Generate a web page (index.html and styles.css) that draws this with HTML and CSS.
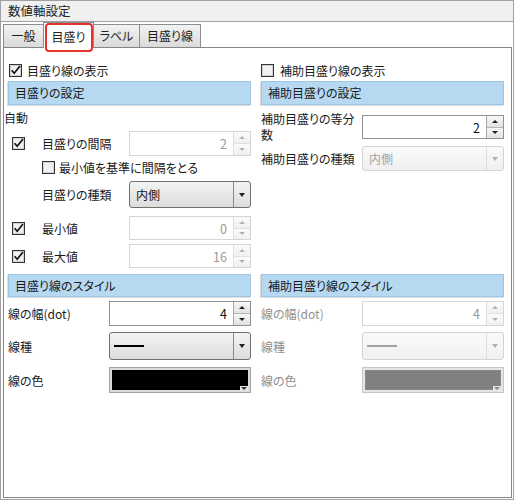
FILE: index.html
```html
<!DOCTYPE html>
<html lang="ja">
<head>
<meta charset="utf-8">
<title>数値軸設定</title>
<link rel="stylesheet" href="styles.css">
</head>
<body>
<div class="window">
  <div class="title">数値軸設定</div>
  <div class="tabs">
    <div class="tab tab-general">一般</div>
    <div class="tab tab-active">目盛り<span class="highlight"></span></div>
    <div class="tab tab-label">ラベル</div>
    <div class="tab tab-grid">目盛り線</div>
  </div>
  <div class="panel">
    <div class="cols top">
      <div class="col">
        <div class="check-row">
          <svg class="cb" width="13" height="13" viewBox="0 0 13 13"><rect x="0.5" y="0.5" width="12" height="12" fill="#fff" stroke="#333"/><rect x="1.5" y="1.5" width="10" height="10" fill="#f1f1f1" stroke="#d2d2d2"/><path d="M2.6 6.2 L5.2 9.2 L11 2" fill="none" stroke="#111" stroke-width="1.7"/></svg>
          <span>目盛り線の表示</span>
        </div>
        <div class="bar">目盛りの設定</div>
        <div class="auto">自動</div>
        <div class="field r-interval">
          <span class="cb-slot"><svg class="cb" width="13" height="13" viewBox="0 0 13 13"><rect x="0.5" y="0.5" width="12" height="12" fill="#fff" stroke="#333"/><rect x="1.5" y="1.5" width="10" height="10" fill="#f1f1f1" stroke="#d2d2d2"/><path d="M2.6 6.2 L5.2 9.2 L11 2" fill="none" stroke="#111" stroke-width="1.7"/></svg></span>
          <span class="flabel">目盛りの間隔</span>
          <div class="spin is-disabled"><span class="spin-value">2</span><span class="spin-btns"><span class="spin-btn"><i class="up"></i></span><span class="spin-btn"><i class="down"></i></span></span></div>
        </div>
        <div class="check-row indent r-minbase">
          <svg class="cb" width="13" height="13" viewBox="0 0 13 13"><rect x="0.5" y="0.5" width="12" height="12" fill="#fff" stroke="#333"/><rect x="1.5" y="1.5" width="10" height="10" fill="#f1f1f1" stroke="#d2d2d2"/></svg>
          <span>最小値を基準に間隔をとる</span>
        </div>
        <div class="field indent r-kind">
          <span class="flabel">目盛りの種類</span>
          <div class="combo"><span class="combo-text">内側</span><span class="combo-arrow"><i class="down"></i></span></div>
        </div>
        <div class="field r-min">
          <span class="cb-slot"><svg class="cb" width="13" height="13" viewBox="0 0 13 13"><rect x="0.5" y="0.5" width="12" height="12" fill="#fff" stroke="#333"/><rect x="1.5" y="1.5" width="10" height="10" fill="#f1f1f1" stroke="#d2d2d2"/><path d="M2.6 6.2 L5.2 9.2 L11 2" fill="none" stroke="#111" stroke-width="1.7"/></svg></span>
          <span class="flabel">最小値</span>
          <div class="spin is-disabled"><span class="spin-value">0</span><span class="spin-btns"><span class="spin-btn"><i class="up"></i></span><span class="spin-btn"><i class="down"></i></span></span></div>
        </div>
        <div class="field r-max">
          <span class="cb-slot"><svg class="cb" width="13" height="13" viewBox="0 0 13 13"><rect x="0.5" y="0.5" width="12" height="12" fill="#fff" stroke="#333"/><rect x="1.5" y="1.5" width="10" height="10" fill="#f1f1f1" stroke="#d2d2d2"/><path d="M2.6 6.2 L5.2 9.2 L11 2" fill="none" stroke="#111" stroke-width="1.7"/></svg></span>
          <span class="flabel">最大値</span>
          <div class="spin is-disabled"><span class="spin-value">16</span><span class="spin-btns"><span class="spin-btn"><i class="up"></i></span><span class="spin-btn"><i class="down"></i></span></span></div>
        </div>
      </div>
      <div class="col">
        <div class="check-row right-check">
          <svg class="cb" width="13" height="13" viewBox="0 0 13 13"><rect x="0.5" y="0.5" width="12" height="12" fill="#fff" stroke="#333"/><rect x="1.5" y="1.5" width="10" height="10" fill="#f1f1f1" stroke="#d2d2d2"/></svg>
          <span>補助目盛り線の表示</span>
        </div>
        <div class="bar">補助目盛りの設定</div>
        <div class="field wide r-divs">
          <span class="flabel two-line">補助目盛りの等分数</span>
          <div class="spin"><span class="spin-value">2</span><span class="spin-btns"><span class="spin-btn"><i class="up"></i></span><span class="spin-btn"><i class="down"></i></span></span></div>
        </div>
        <div class="field wide r-kind2">
          <span class="flabel">補助目盛りの種類</span>
          <div class="combo is-disabled"><span class="combo-text">内側</span><span class="combo-arrow"><i class="down"></i></span></div>
        </div>
      </div>
    </div>
    <div class="cols style">
      <div class="col">
        <div class="bar bar-style">目盛り線のスタイル</div>
        <div class="field wide r-width">
          <span class="flabel">線の幅(dot)</span>
          <div class="spin"><span class="spin-value">4</span><span class="spin-btns"><span class="spin-btn"><i class="up"></i></span><span class="spin-btn"><i class="down"></i></span></span></div>
        </div>
        <div class="field wide r-linetype">
          <span class="flabel">線種</span>
          <div class="combo"><span class="combo-text"><span class="line-sample"></span></span><span class="combo-arrow"><i class="down"></i></span></div>
        </div>
        <div class="field wide r-color">
          <span class="flabel">線の色</span>
          <div class="color"><span class="color-fill"></span><span class="color-arrow"><i class="down"></i></span></div>
        </div>
      </div>
      <div class="col">
        <div class="bar bar-style">補助目盛り線のスタイル</div>
        <div class="field wide r-width is-muted">
          <span class="flabel">線の幅(dot)</span>
          <div class="spin is-disabled"><span class="spin-value">4</span><span class="spin-btns"><span class="spin-btn"><i class="up"></i></span><span class="spin-btn"><i class="down"></i></span></span></div>
        </div>
        <div class="field wide r-linetype is-muted">
          <span class="flabel">線種</span>
          <div class="combo is-disabled"><span class="combo-text"><span class="line-sample"></span></span><span class="combo-arrow"><i class="down"></i></span></div>
        </div>
        <div class="field wide r-color is-muted">
          <span class="flabel">線の色</span>
          <div class="color is-disabled"><span class="color-fill"></span><span class="color-arrow"><i class="down"></i></span></div>
        </div>
      </div>
    </div>
  </div>
</div>
</body>
</html>
```
FILE: styles.css
```css
html, body {
  margin: 0;
  padding: 0;
  background: #fff;
}

body {
  font-family: "Noto Sans CJK JP", "Noto Sans", sans-serif;
  font-size: 12px;
  font-feature-settings: "palt";
  color: #1a1a1a;
}

.window {
  width: 514px;
  height: 500px;
  box-sizing: border-box;
  border: 1px solid #a0a0a0;
  display: flex;
  flex-direction: column;
  background: #fff;
}

.title {
  height: 20px;
  line-height: 20px;
  padding-left: 7px;
  background: #f0f0f0;
  border-bottom: 1px solid #a0a0a0;
  font-size: 12.5px;
  color: #222;
}

.tabs {
  display: flex;
  align-items: flex-end;
  height: 25px;
  padding-left: 2px;
  background: #fff;
}

.tab {
  box-sizing: border-box;
  height: 23px;
  line-height: 21px;
  text-align: center;
  border: 1px solid #8a8d94;
  border-bottom: none;
  margin-right: -1px;
  background: linear-gradient(#f3f3f3, #dadada);
  color: #1e1e1e;
}

.tab-general { width: 41px; }
.tab-label { width: 47px; }
.tab-grid { width: 62px; }

.tab-active {
  width: 51px;
  height: 26px;
  line-height: 27px;
  margin-bottom: -1px;
  background: #fff;
  position: relative;
  z-index: 1;
}

.highlight {
  position: absolute;
  left: 1px;
  top: 0;
  width: 48px;
  height: 29px;
  box-sizing: border-box;
  border: 2px solid #e5342e;
  border-radius: 4px;
}

.panel {
  flex: 1;
  margin: 0 1px 1px 2px;
  border: 1px solid #858585;
  padding: 0 6px 0 4px;
}

.cols {
  display: grid;
  grid-template-columns: 243px 243px;
  column-gap: 10px;
  align-items: start;
}

.col {
  display: flex;
  flex-direction: column;
}

.check-row {
  display: flex;
  align-items: center;
  gap: 5px;
  height: 16px;
  margin-top: 14px;
  padding-left: 1px;
}

.right-check {
  padding-left: 0;
  gap: 6px;
}

.cb {
  display: block;
  flex: none;
}

.bar {
  height: 24px;
  box-sizing: border-box;
  margin-top: 3px;
  padding-left: 6px;
  line-height: 22px;
  background: #b6d9f1;
  border: 1px solid #9cc6e4;
  box-shadow: -1px 1px 1px rgba(0, 0, 0, 0.12);
  color: #1a1a1a;
}

.auto {
  height: 20px;
  line-height: 20px;
  margin-top: 3px;
  margin-left: -4px;
}

.field {
  display: flex;
  align-items: center;
}

.field.indent {
  padding-left: 34px;
}

.check-row.indent {
  padding-left: 34px;
  gap: 4px;
}

.cb-slot {
  width: 34px;
  flex: none;
  padding-left: 4px;
  box-sizing: border-box;
}

.flabel {
  width: 87px;
  flex: none;
}

.field.wide .flabel {
  width: 101px;
}

.two-line {
  line-height: 16px;
}

.field.is-muted .flabel {
  color: #8f8f8f;
}

/* spin box */
.spin {
  flex: 1;
  display: flex;
  height: 25px;
  box-sizing: border-box;
  border: 1px solid #8e9096;
  background: #fff;
  font-size: 12.5px;
}

.spin-value {
  flex: 1;
  text-align: right;
  padding-right: 6px;
  align-self: center;
  color: #111;
}

.spin-btns {
  width: 16px;
  display: flex;
  flex-direction: column;
  border-left: 1px solid #a8a8a8;
}

.spin-btn {
  flex: 1;
  display: flex;
  align-items: center;
  justify-content: center;
  background: linear-gradient(#f7f7f7, #e2e2e2);
}

.spin-btn:first-child {
  border-bottom: 1px solid #b5b5b5;
}

i.up {
  width: 0;
  height: 0;
  border-left: 3px solid transparent;
  border-right: 3px solid transparent;
  border-bottom: 3px solid #222;
}

i.down {
  width: 0;
  height: 0;
  border-left: 3px solid transparent;
  border-right: 3px solid transparent;
  border-top: 3px solid #222;
}

.spin.is-disabled {
  border-color: #d6d6d6;
}

.spin.is-disabled .spin-value {
  color: #9a9a9a;
}

.spin.is-disabled .spin-btns {
  border-left-color: #dedede;
}

.spin.is-disabled .spin-btn {
  background: linear-gradient(#fbfbfb, #f0f0f0);
}

.spin.is-disabled .spin-btn:first-child {
  border-bottom-color: #e0e0e0;
}

.spin.is-disabled i.up { border-bottom-color: #b4b4b4; }
.spin.is-disabled i.down { border-top-color: #b4b4b4; }

/* combo box */
.combo {
  flex: 1;
  display: flex;
  height: 27px;
  box-sizing: border-box;
  border: 1px solid #707070;
  border-radius: 3px;
  background: linear-gradient(#f4f4f4, #e8e8e8 50%, #dcdcdc);
}

.combo-text {
  flex: 1;
  display: flex;
  align-items: center;
  padding-left: 6px;
  color: #111;
}

.combo-arrow {
  width: 16px;
  display: flex;
  align-items: center;
  justify-content: center;
  border-left: 1px solid #8a8a8a;
}

.combo-arrow i.down {
  border-left-width: 3.5px;
  border-right-width: 3.5px;
  border-top-width: 4px;
}

.combo.is-disabled {
  border-color: #d3d3d3;
  background: linear-gradient(#fafafa, #f0f0f0);
}

.combo.is-disabled .combo-text {
  color: #a2a2a2;
}

.combo.is-disabled .combo-arrow {
  border-left-color: #dcdcdc;
}

.combo.is-disabled i.down {
  border-top-color: #b0b0b0;
}

.line-sample {
  display: block;
  width: 30px;
  height: 2px;
  margin-left: -2px;
  background: #000;
}

.combo.is-disabled .line-sample {
  background: #a0a0a0;
}

/* color box */
.color {
  flex: 1;
  display: flex;
  height: 26px;
  box-sizing: border-box;
  border: 1px solid #a4a4a4;
  padding: 2px;
  background: #dcdcdc;
  position: relative;
}

.color-fill {
  flex: 1;
  background: #000;
  border: 1px solid #000;
}

.color-arrow {
  position: absolute;
  right: 2px;
  bottom: 1px;
  width: 8px;
  height: 5px;
  display: flex;
  align-items: center;
  justify-content: center;
  background: #e6e6e6;
}

.color-arrow i.down {
  border-top-color: #333;
}

.color.is-disabled {
  border-color: #c6c6c6;
  background: #e6e6e6;
}

.color.is-disabled .color-fill {
  background: #808080;
  border-color: #8a8a8a;
}

.color.is-disabled .color-arrow i.down {
  border-top-color: #8a8a8a;
}

/* vertical rhythm */
.r-interval { margin-top: 3px; }
.r-minbase { margin-top: 2px; height: 18px; }
.r-kind { margin-top: 5px; }
.r-min { margin-top: 8px; }
.r-min .spin { height: 24px; }
.r-max { margin-top: 4px; }
.r-max .spin { height: 24px; }

.r-divs { margin-top: 6px; height: 32px; }
.r-divs .spin { height: 24px; }
.r-kind2 { margin-top: 3px; }
.r-kind2 .combo { height: 25px; }

.style { margin-top: 6px; }
.bar-style { margin-top: 0; height: 23px; line-height: 21px; }
.r-width { margin-top: 4px; }
.r-linetype { margin-top: 6px; }
.r-linetype .combo { height: 28px; }
.r-color { margin-top: 7px; }
```
